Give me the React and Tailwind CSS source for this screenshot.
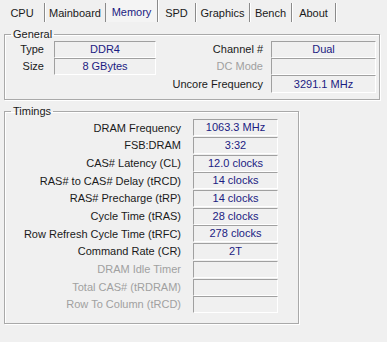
import React from 'react';

// pestañas de la ventana
const tabs = [
    { name: 'CPU', w: 'w-[45px]' },
    { name: 'Mainboard', w: 'w-[61px]' },
    { name: 'Memory', w: 'w-[52px]', active: true },
    { name: 'SPD', w: 'w-[38px]' },
    { name: 'Graphics', w: 'w-[54px]' },
    { name: 'Bench', w: 'w-[42px]' },
    { name: 'About', w: 'w-[44px]' },
];

const timings = [
    { label: 'DRAM Frequency', value: '1063.3 MHz' },
    { label: 'FSB:DRAM', value: '3:32' },
    { label: 'CAS# Latency (CL)', value: '12.0 clocks' },
    { label: 'RAS# to CAS# Delay (tRCD)', value: '14 clocks' },
    { label: 'RAS# Precharge (tRP)', value: '14 clocks' },
    { label: 'Cycle Time (tRAS)', value: '28 clocks' },
    { label: 'Row Refresh Cycle Time (tRFC)', value: '278 clocks' },
    { label: 'Command Rate (CR)', value: '2T' },
    { label: 'DRAM Idle Timer', value: '', disabled: true },
    { label: 'Total CAS# (tRDRAM)', value: '', disabled: true },
    { label: 'Row To Column (tRCD)', value: '', disabled: true },
];

function Field({ children, className = '' }) {
    return (
        <div className={`h-[17px] flex items-center justify-center border-t border-l border-t-[#a0a0a0] border-l-[#a0a0a0] border-b border-r border-b-white border-r-white bg-[#f0f0f0] text-[#1b1b82] leading-none ${className}`}>
            {children}
        </div>
    );
}

function Group({ title, className = '', children }) {
    return (
        <fieldset className={`border border-[#a9a9a9] shadow-[inset_1px_1px_0_#ffffff,1px_1px_0_#ffffff] ${className}`}>
            <legend className="ml-[6px] px-[2px] leading-[14px] text-[#1a1a1a]">{title}</legend>
            {children}
        </fieldset>
    );
}

export default function App() {
    return (
        <div className="w-[387px] h-[342px] bg-[#f0f0f0] text-[11px] text-black overflow-hidden" style={{ fontFamily: '"Liberation Sans", Arial, sans-serif' }}>
            {/* Barra de pestañas */}
            <div className="h-[22px] flex items-end">
                {tabs.map((t) => (
                    <div
                        key={t.name}
                        className={`${t.w} flex items-center justify-center pt-[2px] border-r border-r-[#8a8a8a] shadow-[1px_0_0_#ffffff] ${t.active ? 'h-[22px] text-[#1b1b82] bg-[#f4f4f4]' : 'h-[19px] text-[#1a1a1a]'}`}
                    >
                        {t.name}
                    </div>
                ))}
            </div>

            {/* General */}
            <Group title="General" className="mt-[5px] ml-[4px] w-[376px] pb-[6px]">
                <div className="grid grid-cols-[39px_102px_1fr_105px] gap-x-[10px] gap-y-0 pr-[3px]">
                    <div className="h-[17px] flex items-center justify-end text-[#1a1a1a]">Type</div>
                    <Field>DDR4</Field>
                    <div className="h-[17px] flex items-center justify-end -mr-[2px] text-[#1a1a1a]">Channel #</div>
                    <Field>Dual</Field>

                    <div className="h-[17px] flex items-center justify-end text-[#1a1a1a]">Size</div>
                    <Field>8 GBytes</Field>
                    <div className="h-[17px] flex items-center justify-end -mr-[2px] text-[#a0a0a0]">DC Mode</div>
                    <Field></Field>

                    <div></div>
                    <div></div>
                    <div className="h-[18px] flex items-center justify-end -mr-[2px] text-[#1a1a1a]">Uncore Frequency</div>
                    <Field className="h-[18px]">3291.1 MHz</Field>
                </div>
            </Group>

            {/* Timings */}
            <Group title="Timings" className="mt-[4px] ml-[4px] w-[295px] pt-[1px] pb-[9px]">
                <div className="flex flex-col">
                    {timings.map((r) => (
                        <div key={r.label} className="h-[17.7px] flex items-center">
                            <div className={`w-[176px] text-right ${r.disabled ? 'text-[#a0a0a0]' : 'text-[#1a1a1a]'}`}>{r.label}</div>
                            <Field className="ml-[12px] w-[85px]">{r.value}</Field>
                        </div>
                    ))}
                </div>
            </Group>
        </div>
    );
}
